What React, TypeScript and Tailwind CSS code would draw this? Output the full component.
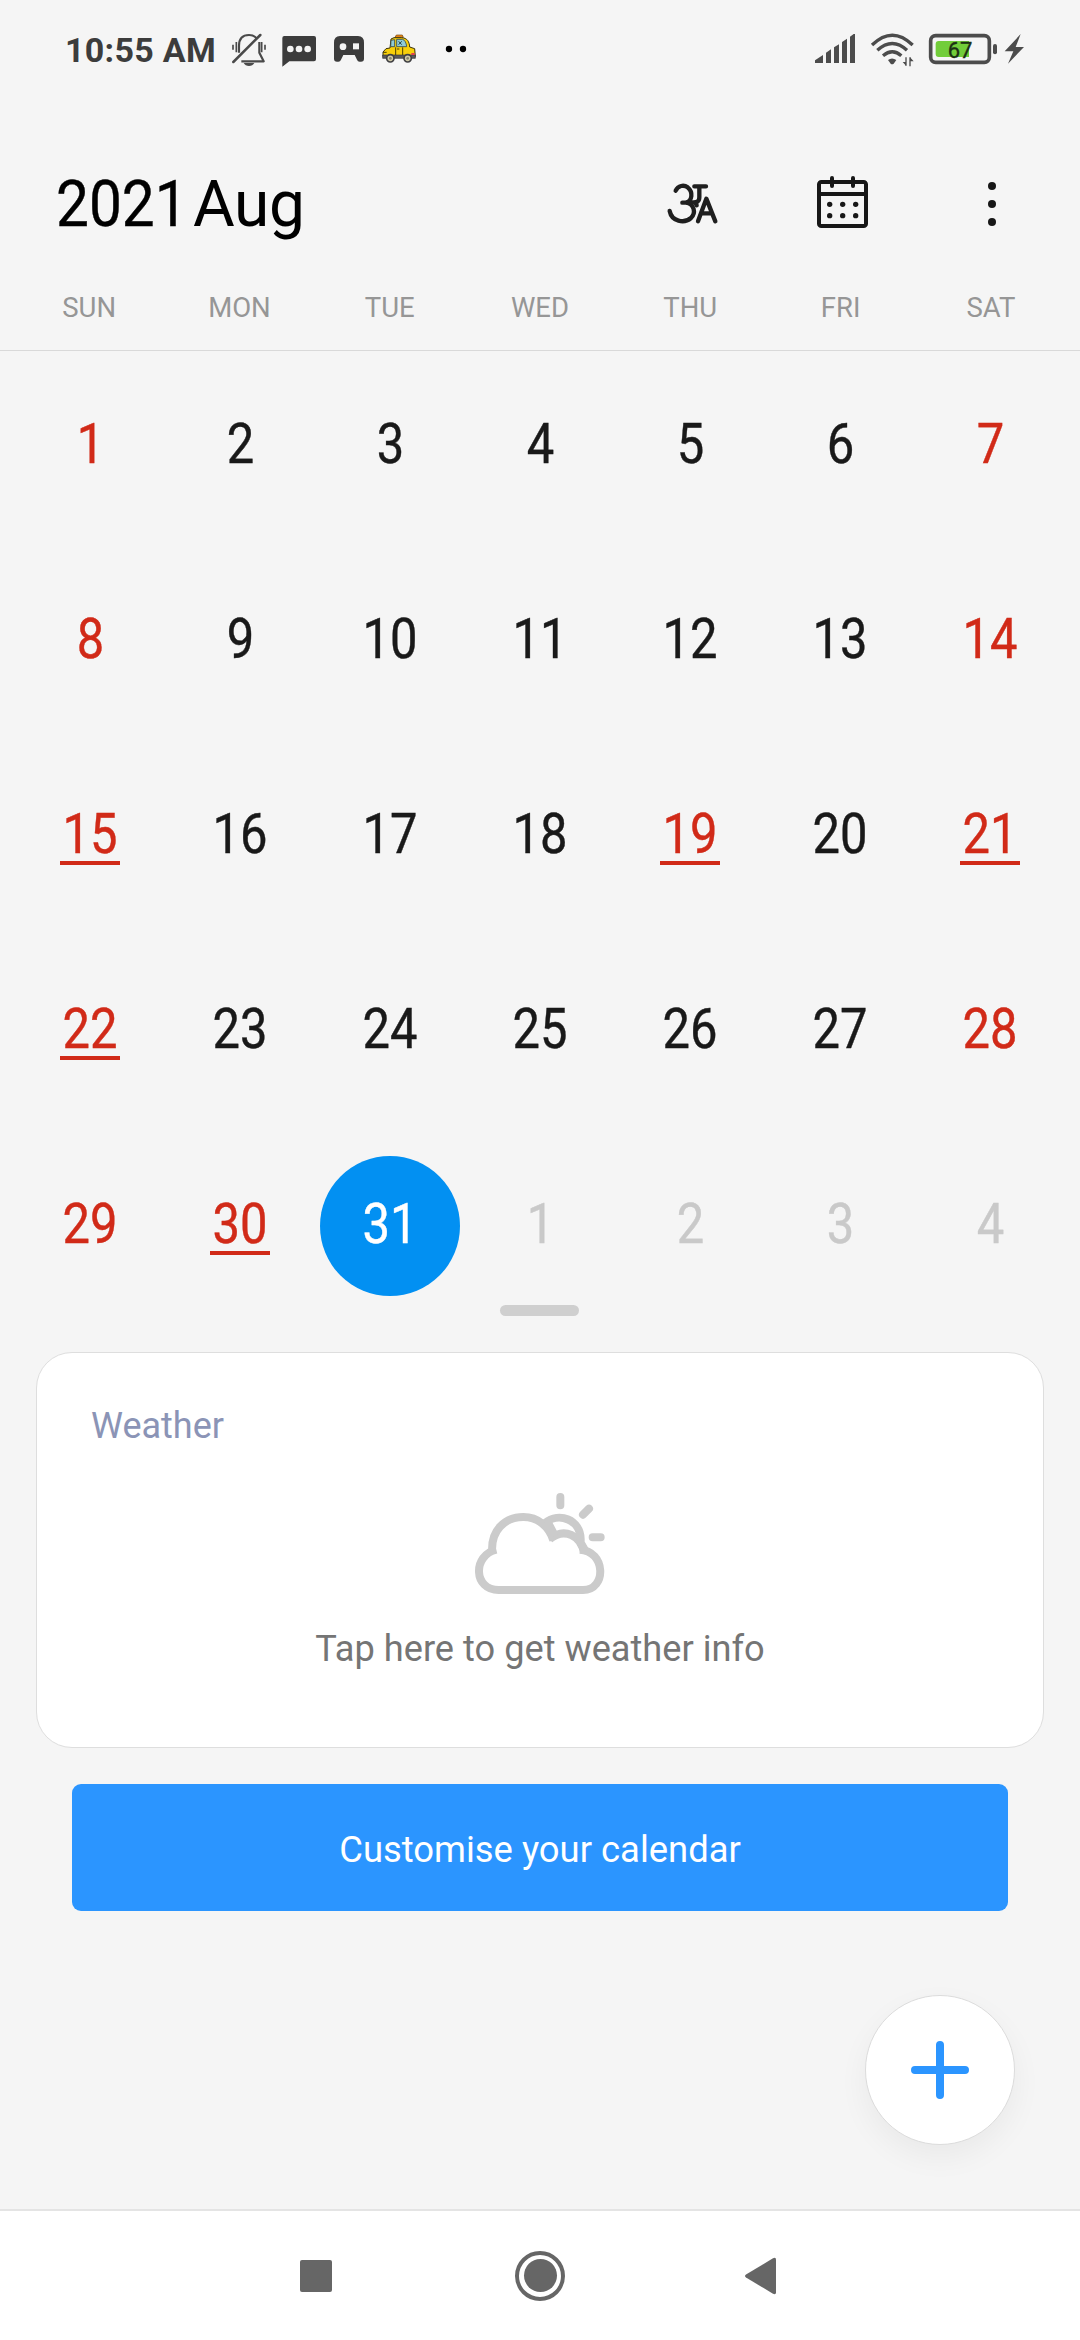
import React from 'react';

const WEEKDAYS = ['SUN', 'MON', 'TUE', 'WED', 'THU', 'FRI', 'SAT'];

type Day = { n: number; red?: boolean; line?: boolean; today?: boolean; next?: boolean };

const HOLIDAYS = [15, 19, 21, 22, 30];
const DAYS: Day[] = [
  ...Array.from({ length: 31 }, (_, i) => {
    const n = i + 1;
    const weekend = i % 7 === 0 || i % 7 === 6;
    return { n, red: weekend || HOLIDAYS.includes(n), line: HOLIDAYS.includes(n), today: n === 31 };
  }),
  ...[1, 2, 3, 4].map((n) => ({ n, next: true })),
];

function StatusBar() {
  return (
    <div className="flex h-[100px] items-start pt-5 text-[#3c3c3c]">
      <span className="ml-[65px] flex h-[60px] w-[165px] items-center pb-[1px] text-[34px] font-bold leading-none tracking-[0.3px] whitespace-nowrap">
        10:55 AM
      </span>
      <svg className="h-[60px] w-[38px]" viewBox="30 0 114 180" fill="none" stroke="#4a4a4a" strokeWidth="6.5">
        <path d="M57 98V78C57 56 68 45 87 45C98 45 105 49 110 55M118 66V98L131 124H64" strokeLinejoin="round" />
        <path d="M40 126L121 45" strokeWidth="7.5" strokeLinecap="round" />
        <path d="M49 66V97M125 66V97" strokeWidth="5" />
        <path d="M39 74V89M135 74V89" strokeWidth="5" />
        <path d="M71 129H103Q98 138 87 138T71 129Z" fill="#4a4a4a" stroke="none" />
      </svg>
      <svg className="ml-3 h-[60px] w-[38px]" viewBox="180 0 114 180">
        <path d="M193 48H282Q288 48 288 54V118Q288 124 282 124H208L187 140V54Q187 48 193 48Z" fill="#3c3c3c" />
        <g fill="#f4f4f4"><circle cx="211" cy="87" r="10" /><circle cx="237" cy="87" r="10" /><circle cx="263" cy="87" r="10" /></g>
      </svg>
      <svg className="ml-3.5 h-[60px] w-[34px]" viewBox="336 0 102 180">
        <path d="M360 48H414Q432 48 432 68V116Q432 125 423 125H419Q413 125 411 119L404 105H370L363 119Q361 125 355 125H351Q342 125 342 116V68Q342 48 360 48Z" fill="#3c3c3c" />
        <circle cx="369" cy="80" r="10" fill="#f4f4f4" />
        <rect x="399" y="70" width="18" height="18" fill="#f4f4f4" />
      </svg>
      <svg className="ml-3.5 h-[60px] w-[38px]" viewBox="480 0 114 180">
        <path d="M525 52L529 45H547L550 52Z" fill="#f28a16" stroke="#6b4310" strokeWidth="2" />
        <path d="M510 84L513 57L522 53H545C562 54 568 65 569 81L584 86L586 110H489V96L498 86Z" fill="#f7cf0a" stroke="#3b3208" strokeWidth="3" />
        <path d="M513 61L524 59V80H512ZM530 58H548Q558 62 560 80H530Z" fill="#8fcbd6" stroke="#34474a" strokeWidth="2.5" />
        <path d="M536 64L545 74M545 64L536 74" stroke="#234046" strokeWidth="3" />
        <path d="M527 82V108M548 82V108M531 87H538M489 97H500" stroke="#4c3f04" strokeWidth="3" />
        <path d="M488 105H586V115H488Z" fill="#59595c" stroke="#333" strokeWidth="2" />
        <rect x="574" y="99" width="10" height="6" fill="#e33e53" />
        <g fill="#cfc9a6" stroke="#3f3f42" strokeWidth="5"><circle cx="511" cy="115" r="11" /><circle cx="563" cy="115" r="11" /></g>
        <g fill="#85846f"><circle cx="511" cy="115" r="4" /><circle cx="563" cy="115" r="4" /></g>
      </svg>
      <svg className="ml-[26px] h-[60px] w-6" viewBox="672 0 72 180" fill="#000">
        <circle cx="687" cy="87" r="9.5" /><circle cx="729" cy="87" r="9.5" />
      </svg>
      <div className="mr-[55px] ml-auto flex">
        <svg className="h-[60px] w-[42px]" viewBox="42 0 126 180" fill="#4c4c4c">
          <path d="M45 129V121L69 105V129ZM78 129V98L93 88V129ZM102 129V82L117 73V129ZM126 129V66L141 56V129ZM150 129V50L161 42H165V129Z" />
        </svg>
        <svg className="ml-3.5 h-[60px] w-11" viewBox="210 0 132 180" fill="none" stroke="#4c4c4c" strokeWidth="10">
          <path d="M216 75Q277 16 338 75M232 91Q277 50 321 91M249 107Q277 83 304 107" />
          <path d="M264 120Q276 111 289 120L281 131Q276 134 272 131Z" fill="#4c4c4c" stroke="none" />
          <path d="M318 112V137M330 139V112" strokeWidth="4" />
          <path d="M308 126H318V137ZM330 112V124H341Z" fill="#4c4c4c" stroke="none" />
        </svg>
        <svg className="ml-3.5 h-[60px] w-[71px]" viewBox="384 0 213 180">
          <rect x="392" y="47" width="176" height="80" rx="15" fill="none" stroke="#4c4c4c" strokeWidth="11" />
          <path d="M416 63H507V111H416Q407 111 407 102V72Q407 63 416 63Z" fill="#72cd3a" />
          <rect x="579" y="72" width="12" height="31" rx="6" fill="#4c4c4c" />
          <text x="480" y="113" textAnchor="middle" fontSize="66" fontWeight="400" fill="#1c3014" stroke="#1c3014" strokeWidth="1">67</text>
        </svg>
        <svg className="ml-[5px] h-[60px] w-[21px]" viewBox="612 0 63 180" fill="#4c4c4c">
          <path d="M662 42L614 94H640L624 131L672 81H647Z" />
        </svg>
      </div>
    </div>
  );
}

function Header() {
  return (
    <header className="flex h-[156px] items-center pt-[50px] pr-[13px] pl-14 text-black">
      <h1 className="flex flex-1 pt-1 text-[64px] leading-none font-normal">
        <span className="w-[137px] origin-left scale-x-[0.915] [-webkit-text-stroke:0.4px]">2021</span>
        <span className="tracking-[-0.4px]">Aug</span>
      </h1>
      <button className="flex w-[150px] justify-center" aria-label="Language">
        <svg className="h-[54px] w-[55px]" viewBox="75 78 165 162" fill="none" stroke="#1f1f1f" strokeWidth="13" strokeLinecap="round" strokeLinejoin="round">
          <path d="M107 122C114 106 132 104 143 112C160 126 157 153 138 158H127M138 158C164 162 168 190 153 204C132 222 95 214 89 183" />
          <path d="M163 109H198M178 111V142C178 155 170 158 157 157H142M166 157L170 166" />
          <path d="M174 214L199 146L226 214M184 190H216" />
        </svg>
      </button>
      <button className="-mt-[2px] flex w-[150px] justify-center" aria-label="View">
        <svg className="h-[54px] w-[53px]" viewBox="525 75 159 162" fill="none" stroke="#171717" strokeWidth="12">
          <rect x="534" y="96" width="141" height="132" rx="7" />
          <path d="M534 132H675" />
          <path d="M573 84V108M636 84V108" strokeLinecap="round" />
          <g fill="#171717" stroke="none">
            <circle cx="566" cy="163" r="8" /><circle cx="605" cy="163" r="8" /><circle cx="644" cy="163" r="8" />
            <circle cx="566" cy="197" r="8" /><circle cx="605" cy="197" r="8" /><circle cx="644" cy="197" r="8" />
          </g>
        </svg>
      </button>
      <button className="flex w-[150px] flex-col items-center gap-2.5 pt-[2px]" aria-label="More">
        <i className="size-2 rounded-full bg-[#171717]" />
        <i className="size-2 rounded-full bg-[#171717]" />
        <i className="size-2 rounded-full bg-[#171717]" />
      </button>
    </header>
  );
}

function DayCell({ day }: { day: Day }) {
  const color = day.today ? 'text-white' : day.next ? 'text-[#c9c9c9]' : day.red ? 'text-[#d12a18]' : 'text-[#191919]';
  return (
    <div className="flex h-[195px] justify-center pt-[25px]">
      <div className={`flex size-[140px] flex-col items-center rounded-full pt-[41px] ${day.today ? 'bg-[#0290f2]' : ''} ${color}`}>
        <span className="h-[53px] scale-x-[0.89] text-[55px] leading-[55px] [-webkit-text-stroke:0.4px]">{day.n}</span>
        {day.line && <span className="mt-[0.5px] h-[4.5px] w-[60px] bg-[#d12a18]" />}
      </div>
    </div>
  );
}

function WeatherCard() {
  return (
    <section className="mx-9 flex h-[396px] flex-col items-center rounded-[36px] border border-[#dedede] bg-white">
      <h2 className="mt-[52px] w-full pl-[54px] text-[36px] leading-[42px] text-[#8b94b6]">Weather</h2>
      <svg className="mt-[43px] h-[106px] w-[134px]" viewBox="97 60 402 318" fill="none" stroke="#cbcbcb" strokeWidth="24">
        <path d="M155 251C148 180 194 141 248 141C292 141 326 170 338 211M327 207C371 172 422 196 430 250M417 239C496 242 499 360 427 360H174C98 360 95 256 167 239" />
        <path d="M313 159C356 124 419 150 420 207V218L433 241M321 156L342 196" />
        <path d="M359 81V106M427 134L445 116M456 202H480" strokeLinecap="round" />
      </svg>
      <p className="mt-[32px] text-[36.2px] leading-[42px] text-[#757575]">Tap here to get weather info</p>
    </section>
  );
}

export default function App() {
  return (
    <div className="flex h-[2340px] w-[1080px] flex-col overflow-hidden bg-[#f5f5f5] font-['Roboto',sans-serif]">
      <StatusBar />
      <Header />
      <div className="grid h-[95px] grid-cols-7 border-b border-[#d9d9d9] px-[14px] pt-[36px] text-center text-[27.5px] leading-8 text-[#969696]">
        {WEEKDAYS.map((d) => <span key={d}>{d}</span>)}
      </div>
      <main className="grid grid-cols-7 px-[15px]">
        {DAYS.map((d, i) => <DayCell key={i} day={d} />)}
      </main>
      <div className="-mt-[21px] mb-9 ml-[500px] h-[11px] w-[79px] rounded-full bg-[#cfcfcf]" />
      <WeatherCard />
      <button className="mx-[72px] mt-9 h-[127px] rounded-[9px] bg-[#2b95ff] pt-[6px] text-[36.4px] text-white">
        Customise your calendar
      </button>
      <button className="mt-[84px] mr-[65px] flex size-[150px] shrink-0 items-center justify-center self-end rounded-full border border-[#dcdcdc] bg-white shadow-[0_12px_30px_rgba(0,0,0,0.05)]" aria-label="Add event">
        <svg className="size-[58px]" viewBox="0 0 58 58" stroke="#2b95ff" strokeWidth="8" strokeLinecap="round">
          <path d="M4 29H54M29 4V54" />
        </svg>
      </button>
      <nav className="mt-auto flex h-[131px] items-center border-t-2 border-[#e4e4e4] bg-white">
        <button className="ml-[300px] h-8 w-8 rounded-[2px] bg-[#666]" aria-label="Recents" />
        <button className="ml-[183px] flex size-[50px] items-center justify-center rounded-full border-4 border-[#666]" aria-label="Home">
          <span className="size-[33px] rounded-full bg-[#666]" />
        </button>
        <svg className="ml-[179px] h-[38px] w-8" viewBox="0 0 32 38" fill="#666">
          <path d="M2 17.6Q0 19 2 20.4L29 36.8Q32 38 32 35.5V2.5Q32 0 29 1.2Z" />
        </svg>
      </nav>
    </div>
  );
}
